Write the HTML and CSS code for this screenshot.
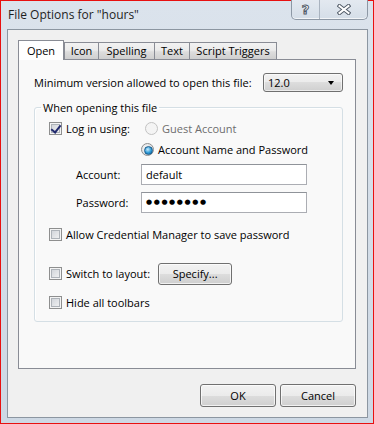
FILE: index.html
```html
<!DOCTYPE html>
<html lang="en">
<head>
    <meta charset="UTF-8">
    <title>File Options for "hours"</title>
    <link rel="stylesheet" href="styles.css">
</head>
<body>
    <div class="window">
        <div class="titlebar">
            <span class="title">File Options for "hours"</span>
            <div class="caption-buttons">
                <div class="cap-btn help"><span>?</span></div>
                <div class="cap-btn close">
                    <svg width="14" height="11" viewBox="0 0 14 11">
                        <path d="M2.5 2 L11.5 9 M11.5 2 L2.5 9" stroke="#4f5966" stroke-width="4" stroke-linecap="square" fill="none"/>
                        <path d="M2.5 2 L11.5 9 M11.5 2 L2.5 9" stroke="#ffffff" stroke-width="2" stroke-linecap="square" fill="none"/>
                    </svg>
                </div>
            </div>
        </div>

        <div class="client">
            <div class="tabs">
                <div class="tab active" style="width: 46px">Open</div>
                <div class="tab" style="width: 35px">Icon</div>
                <div class="tab" style="width: 57px">Spelling</div>
                <div class="tab" style="width: 36px">Text</div>
                <div class="tab" style="width: 88px">Script Triggers</div>
            </div>

            <div class="panel">
                <div class="version-row">
                    <span>Minimum version allowed to open this file:</span>
                    <div class="dropdown">
                        <span>12.0</span>
                        <span class="arrow"></span>
                    </div>
                </div>

                <fieldset class="group">
                    <legend>When opening this file</legend>

                    <div class="row">
                        <div class="check-cell">
                            <span class="checkbox checked"></span>
                            <span>Log in using:</span>
                        </div>
                        <span class="radio disabled"></span>
                        <span class="muted">Guest Account</span>
                    </div>

                    <div class="row indent">
                        <span class="radio selected"></span>
                        <span>Account Name and Password</span>
                    </div>

                    <div class="field-row first">
                        <span class="field-label">Account:</span>
                        <div class="textbox">default</div>
                    </div>

                    <div class="field-row">
                        <span class="field-label">Password:</span>
                        <div class="textbox password">&#9679;&#9679;&#9679;&#9679;&#9679;&#9679;&#9679;&#9679;</div>
                    </div>

                    <div class="row credential">
                        <span class="checkbox"></span>
                        <span>Allow Credential Manager to save password</span>
                    </div>

                    <div class="row switch">
                        <span class="checkbox"></span>
                        <span>Switch to layout:</span>
                        <button class="button specify">Specify...</button>
                    </div>

                    <div class="row hide">
                        <span class="checkbox"></span>
                        <span>Hide all toolbars</span>
                    </div>
                </fieldset>
            </div>

            <div class="actions">
                <button class="button">OK</button>
                <button class="button">Cancel</button>
            </div>
        </div>
    </div>
</body>
</html>
```

FILE: styles.css
```css
* {
    margin: 0;
    padding: 0;
    box-sizing: border-box;
}

body {
    font-family: "Open Sans", "Noto Sans", sans-serif;
    font-size: 11px;
    color: #000;
    background: #fff;
}

.window {
    width: 374px;
    height: 424px;
    border: 1px solid #e81010;
    background: linear-gradient(#dbe3ec, #cdd8e4);
    display: flex;
    flex-direction: column;
}

.titlebar {
    height: 28px;
    display: flex;
    align-items: flex-start;
    padding-left: 7px;
}

.title {
    font-size: 12px;
    line-height: 12px;
    margin-top: 8px;
    color: #1e1e1e;
}

.caption-buttons {
    margin-left: auto;
    margin-right: 5px;
    margin-top: -1px;
    display: flex;
    height: 20px;
    border: 1px solid #8d98a5;
    border-top: none;
    border-radius: 0 0 5px 5px;
    background: linear-gradient(#e3e9f0, #d5dee8);
    box-shadow: inset 0 -1px 0 rgba(255, 255, 255, 0.7);
}

.cap-btn {
    display: flex;
    align-items: center;
    justify-content: center;
}

.cap-btn.help {
    width: 28px;
    border-right: 1px solid #a9b3bf;
}

.cap-btn.help span {
    font-family: "DejaVu Sans", sans-serif;
    font-size: 13px;
    font-weight: bold;
    color: #fff;
    -webkit-text-stroke: 1px #4f5966;
    line-height: 13px;
}

.cap-btn.close {
    width: 47px;
}

.client {
    flex: 1;
    margin: 0 5px 5px 6px;
    border: 1px solid #8c96a1;
    background: #f0f0f0;
    padding: 10px 11px 10px 10px;
    display: flex;
    flex-direction: column;
}

/* tabs */
.tabs {
    display: flex;
    align-items: flex-end;
    height: 19px;
    position: relative;
    z-index: 1;
}

.tab {
    height: 17px;
    border: 1px solid #898c95;
    border-bottom: none;
    margin-left: -1px;
    text-align: center;
    line-height: 16px;
    background: linear-gradient(#f2f2f2 0%, #ebebeb 45%, #dddddd 55%, #cfcfcf 100%);
}

.tab.active {
    height: 20px;
    margin-left: 0;
    margin-bottom: -1px;
    margin-right: 0;
    background: #fff;
    line-height: 19px;
    position: relative;
    z-index: 2;
}

.tab.active + .tab {
    margin-left: 0;
}

.panel {
    height: 310px;
    border: 1px solid #898c95;
    background: #f9f9f9;
    padding: 13px 12px 0 15px;
}

.version-row {
    display: flex;
    align-items: center;
    justify-content: space-between;
    height: 19px;
}

.dropdown {
    width: 80px;
    height: 19px;
    border: 1px solid #707070;
    border-radius: 3px;
    background: linear-gradient(#f2f2f2 0%, #ebebeb 50%, #dddddd 50%, #cfcfcf 100%);
    box-shadow: inset 0 0 0 1px rgba(255, 255, 255, 0.6);
    display: flex;
    align-items: center;
    justify-content: space-between;
    padding: 0 8px 0 4px;
    line-height: 17px;
}

.arrow {
    width: 0;
    height: 0;
    border-left: 3.5px solid transparent;
    border-right: 3.5px solid transparent;
    border-top: 4px solid #000;
}

/* group box */
.group {
    margin-top: 8px;
    border: 1px solid #d5dfe5;
    border-radius: 3px;
    padding: 6px 10px 10px 14px;
    height: 222px;
    box-shadow: inset 1px 1px 0 #fff;
}

.group legend {
    margin-left: -8px;
    padding: 0 2px;
    line-height: 15px;
}

.row {
    display: flex;
    align-items: center;
    height: 15px;
    gap: 4px;
    line-height: 15px;
}

.check-cell {
    width: 92px;
    display: flex;
    align-items: center;
    gap: 4px;
}

.row.indent {
    margin-top: 6px;
    padding-left: 92px;
}

.row.credential {
    margin-top: 14px;
}

.row.switch {
    margin-top: 21px;
    height: 21px;
}

.row.hide {
    margin-top: 11px;
}

.muted {
    color: #6d6d6d;
}

.checkbox {
    width: 13px;
    height: 13px;
    flex-shrink: 0;
    border: 1px solid #8e8f8f;
    background: #f4f4f4;
    box-shadow: inset 0 0 0 1px #f4f4f4, inset 0 0 0 2px #aeb3b9;
    background-image: linear-gradient(135deg, #cbcfd5, #f6f6f6);
    position: relative;
}

.checkbox.checked::after {
    content: "";
    position: absolute;
    left: 3px;
    top: 0px;
    width: 4px;
    height: 8px;
    border-right: 2px solid #222a6e;
    border-bottom: 2px solid #222a6e;
    transform: rotate(38deg);
}

.radio {
    width: 13px;
    height: 13px;
    flex-shrink: 0;
    border-radius: 50%;
    border: 1px solid #8e8f8f;
    background: radial-gradient(circle at 40% 35%, #f6f6f6, #d4d7db);
    position: relative;
}

.radio.disabled {
    border-color: #c3c3c3;
    background: #f4f4f4;
}

.radio.selected::after {
    content: "";
    position: absolute;
    left: 2px;
    top: 2px;
    width: 7px;
    height: 7px;
    border-radius: 50%;
    background: radial-gradient(circle at 40% 35%, #c8ecff, #2a98d4 55%, #135f9a);
    border: 0.5px solid #1a5d8e;
}

.field-row {
    display: flex;
    align-items: center;
    margin-top: 7px;
    padding-left: 27px;
}

.field-row.first {
    margin-top: 7px;
}

.field-label {
    width: 65px;
}

.textbox {
    width: 166px;
    height: 21px;
    border: 1px solid #abadb3;
    border-top-color: #8f9399;
    background: #fff;
    padding-left: 4px;
    line-height: 19px;
}

.textbox.password {
    font-family: "DejaVu Sans", sans-serif;
    font-size: 7px;
    letter-spacing: 1.6px;
    line-height: 19px;
}

/* buttons */
.button {
    font-family: inherit;
    font-size: 11px;
    color: #000;
    height: 23px;
    width: 76px;
    border: 1px solid #707070;
    border-radius: 3px;
    background: linear-gradient(#f2f2f2 0%, #ebebeb 50%, #dddddd 50%, #cfcfcf 100%);
    box-shadow: inset 0 0 0 1px rgba(255, 255, 255, 0.7);
}

.button.specify {
    width: 74px;
    height: 22px;
    margin-left: 4px;
}

.actions {
    margin-top: auto;
    display: flex;
    justify-content: flex-end;
    gap: 4px;
}
```
